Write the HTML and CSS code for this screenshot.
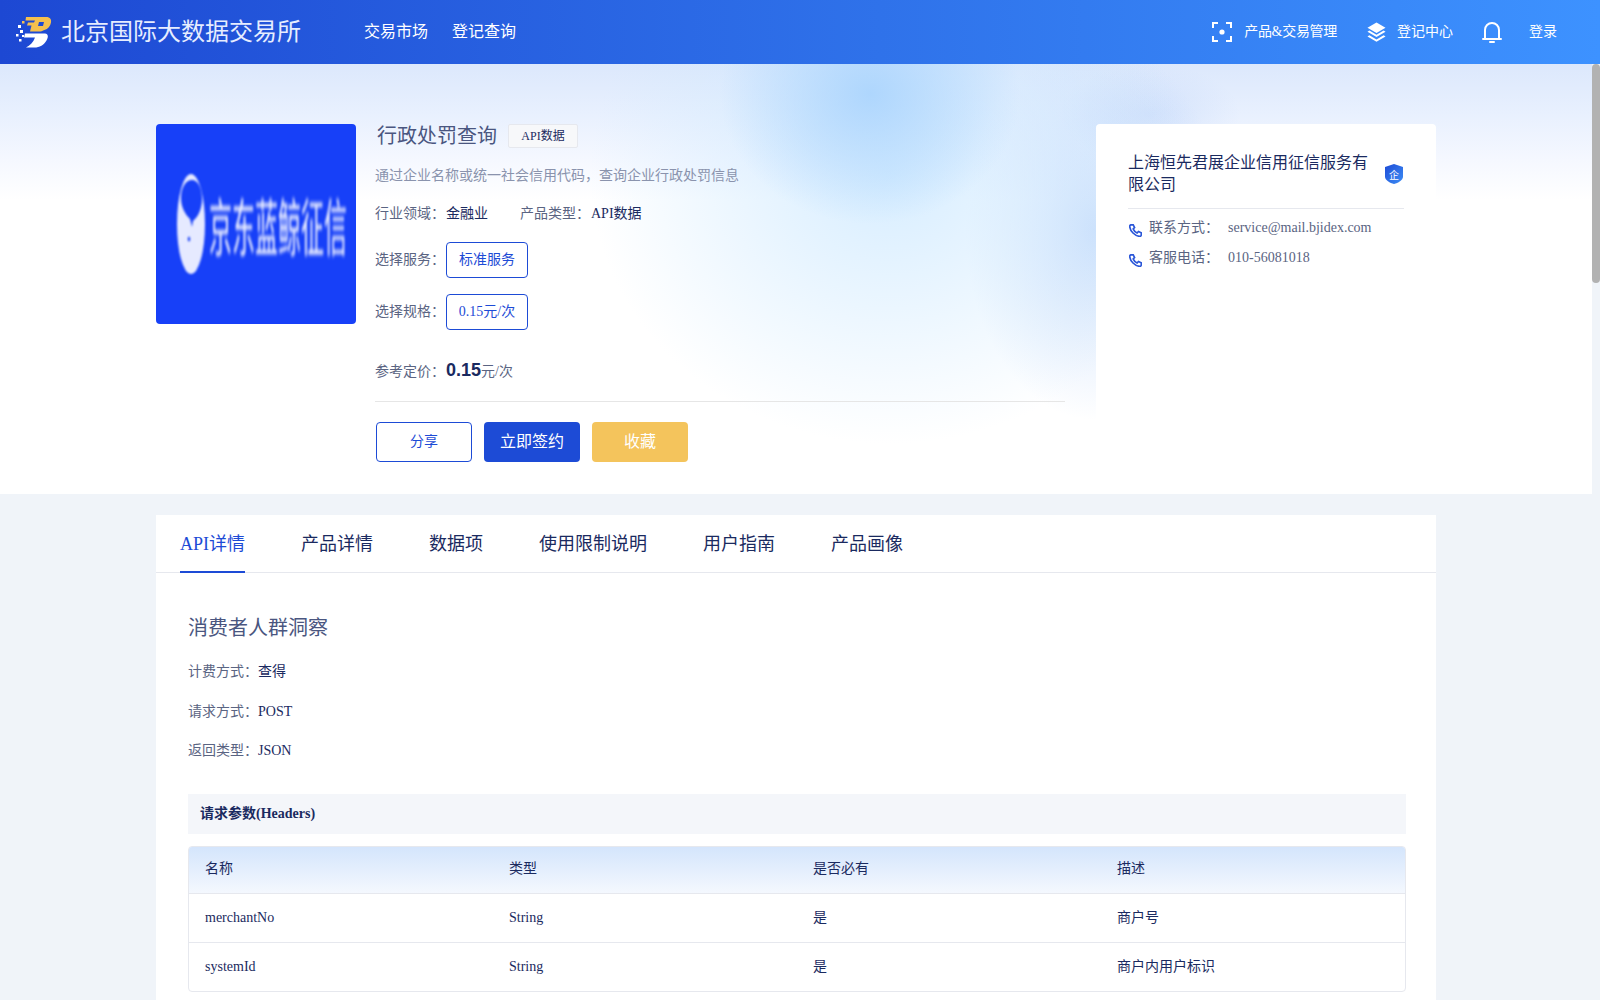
FILE: index.html
```html
<!DOCTYPE html>
<html lang="zh-CN">
<head>
<meta charset="utf-8">
<title>行政处罚查询</title>
<link rel="stylesheet" href="styles.css">
</head>
<body>
<div class="app">
  <header class="topbar">
    <div class="brand">
      <svg class="brand-logo" viewBox="0 0 36 32" width="36" height="32">
        <path fill="#f5c04e" fill-rule="evenodd" d="M10 1H30c4.500 0 5.500 2.500 5 5.500-.6 3.500-3 6.500-6.500 7.500-1 .3-2.500 1.500-4 1.500H14l1.500-6H11l1-3h6l1-2H9.500zM23 6l-1 4h5l1-4z"/>
        <path fill="#fff" d="M9 17.500h20c3.500.6 3.500 3.500 1.500 7-2.500 4.500-7 7-12 7H10c4-2 7.500-5.500 9-10h-11z"/>
        <g fill="#fff"><rect x="2" y="9" width="3" height="3"/><rect x="4" y="14" width="3" height="3"/><rect x="0" y="18" width="2.500" height="2.500"/><rect x="3" y="23" width="2.500" height="2.500"/><rect x="6" y="19" width="2" height="2"/></g>
        <rect x="6" y="5" width="2.500" height="2.500" fill="#f5c04e"/>
      </svg>
      <span class="brand-name">北京国际大数据交易所</span>
    </div>
    <nav class="mainnav"><a>交易市场</a><a>登记查询</a></nav>
    <div class="toolbar">
      <a class="tool">
        <svg class="tool-icon" viewBox="0 0 20 20" width="20" height="20" fill="none" stroke="#fff" stroke-width="2"><path d="M1 6V1h5M14 1h5v5M19 14v5h-5M6 19H1v-5"/><circle cx="10" cy="10" r="2.600" fill="#fff" stroke="none"/></svg>
        <span class="tool-text tool-tight">产品&amp;交易管理</span>
      </a>
      <a class="tool tool-stack">
        <svg class="tool-icon" viewBox="0 0 20 22" width="19" height="22" fill="#fff"><path d="M10 1l9.500 5.500L10 12 .5 6.500z"/><path d="M2.500 9.500L10 14l7.500-4.500 2 1.200L10 16.300.5 10.700z"/><path d="M2.500 14.500L10 19l7.500-4.500 2 1.200L10 21.300.5 15.700z"/></svg>
        <span class="tool-text">登记中心</span>
      </a>
      <svg class="bell" viewBox="0 0 20 22" width="20" height="22" fill="none" stroke="#fff" stroke-width="2"><path d="M3 17V9a7 7 0 0 1 14 0v8"/><path d="M1 18h18" stroke-linecap="round"/><path d="M8 21h4" stroke-linecap="round"/></svg>
      <a class="login">登录</a>
    </div>
  </header>

  <div class="body-row">
    <main class="scroller">
      <section class="hero">
        <div class="hero-inner">
          <div class="cover">
            <svg class="cover-mark" viewBox="0 0 30 102" width="30" height="102">
              <ellipse cx="15" cy="51" rx="14" ry="50" fill="#e6eaff"/>
              <path d="M16 7c6 0 10 8 10 19 0 10-4 18-9 22l-1 6-2-8C9 41 5 34 5 25 5 14 10 7 16 7z" fill="#1740f8"/>
              <ellipse cx="13" cy="66" rx="1.200" ry="2.500" fill="#1740f8"/>
            </svg>
            <span class="cover-name">京东蓝鲸征信</span>
          </div>
          <div class="info">
            <div class="title-row"><h1>行政处罚查询</h1><span class="tag">API数据</span></div>
            <p class="desc">通过企业名称或统一社会信用代码，查询企业行政处罚信息</p>
            <div class="meta-row">
              <span><span class="label">行业领域：</span><span class="val">金融业</span></span>
              <span><span class="label">产品类型：</span><span class="val">API数据</span></span>
            </div>
            <div class="choice"><span class="label">选择服务：</span><span class="chip">标准服务</span></div>
            <div class="choice"><span class="label">选择规格：</span><span class="chip">0.15元/次</span></div>
            <div class="price"><span class="label">参考定价：</span><b>0.15</b><span class="label">元/次</span></div>
            <div class="actions">
              <button class="btn btn-line">分享</button>
              <button class="btn btn-main">立即签约</button>
              <button class="btn btn-gold">收藏</button>
            </div>
          </div>
          <aside class="vendor">
            <div class="vendor-head">
              <div class="vendor-name">上海恒先君展企业信用征信服务有限公司</div>
              <span class="shield">
                <svg viewBox="0 0 18 20" width="18" height="20">
                  <defs><linearGradient id="shieldFill" x1="0" y1="0" x2="1" y2="1"><stop offset="0" stop-color="#1d4bd6"/><stop offset="1" stop-color="#3d8ef5"/></linearGradient></defs>
                  <path fill="url(#shieldFill)" d="M9 0l9 3v10c0 3-5 6-9 7-4-1-9-4-9-7V3z"/>
                </svg>
                <i>企</i>
              </span>
            </div>
            <div class="contact">
              <svg viewBox="0 0 14 14" width="13" height="13" fill="none" stroke="#2a56d8" stroke-width="1.800"><path d="M2 1l2.500-.2 1.500 3-1.500 1.500c.8 2 2.300 3.600 4.200 4.400L10.200 8l3 1.500V12c-.2.900-1 1.500-2 1.300C6 12.500 1.500 8 .8 3 .7 2 1.200 1.200 2 1z"/></svg>
              <span class="c-label">联系方式：</span><span class="c-val">service@mail.bjidex.com</span>
            </div>
            <div class="contact">
              <svg viewBox="0 0 14 14" width="13" height="13" fill="none" stroke="#2a56d8" stroke-width="1.800"><path d="M2 1l2.500-.2 1.500 3-1.500 1.500c.8 2 2.300 3.600 4.200 4.400L10.200 8l3 1.500V12c-.2.900-1 1.500-2 1.300C6 12.500 1.500 8 .8 3 .7 2 1.200 1.200 2 1z"/></svg>
              <span class="c-label">客服电话：</span><span class="c-val">010-56081018</span>
            </div>
          </aside>
        </div>
      </section>

      <section class="panel">
        <div class="tabs">
          <a class="tab active">API详情</a><a class="tab">产品详情</a><a class="tab">数据项</a><a class="tab">使用限制说明</a><a class="tab">用户指南</a><a class="tab">产品画像</a>
        </div>
        <div class="panel-body">
          <h2>消费者人群洞察</h2>
          <p class="kv"><span class="label">计费方式：</span><span class="val">查得</span></p>
          <p class="kv"><span class="label">请求方式：</span><span class="val">POST</span></p>
          <p class="kv"><span class="label">返回类型：</span><span class="val">JSON</span></p>
          <div class="section-bar">请求参数(Headers)</div>
          <div class="tbl">
            <div class="tr th"><span>名称</span><span>类型</span><span>是否必有</span><span>描述</span></div>
            <div class="tr"><span>merchantNo</span><span>String</span><span class="zh">是</span><span class="zh">商户号</span></div>
            <div class="tr"><span>systemId</span><span>String</span><span class="zh">是</span><span class="zh">商户内用户标识</span></div>
          </div>
        </div>
      </section>
    </main>
    <div class="rail"><div class="thumb"></div></div>
  </div>
</div>
</body>
</html>
```
FILE: styles.css
```css
* { box-sizing: border-box; }
html, body { margin: 0; height: 100%; overflow: hidden; }
body { font-family: "Liberation Serif", "Noto Sans CJK SC", serif; font-size: 14px; color: #1a2a60; background: #f0f4f9; }
a { color: inherit; text-decoration: none; }
h1, h2, p { margin: 0; font-weight: 400; }

.app { height: 100vh; display: flex; flex-direction: column; }

.topbar { flex: 0 0 64px; display: flex; align-items: center; color: #fff; background: linear-gradient(90deg, #1d48d3 0%, #2f72ea 55%, #3d92ff 100%); }
.brand { display: flex; align-items: center; margin-left: 16px; gap: 9px; }
.brand-name { font-size: 24px; line-height: 32px; color: #e6edff; }
.mainnav { display: flex; gap: 24px; margin-left: 63px; font-size: 16px; }
.mainnav a { display: block; padding-bottom: 4px; }
.toolbar { margin-left: auto; display: flex; align-items: center; margin-right: 43px; }
.tool { display: flex; align-items: center; gap: 12px; margin-right: 30px; }
.tool-stack { gap: 11px; margin-right: 29px; }
.tool-icon { display: block; }
.tool-text, .login { display: block; padding-bottom: 4px; }
.tool-tight { letter-spacing: -.3px; }
.bell { display: block; margin-right: 27px; }

.body-row { flex: 1; min-height: 0; display: flex; }
.scroller { flex: 1; min-width: 0; overflow: hidden; }
.rail { flex: 0 0 8px; }
.thumb { height: 219px; background: #b2b2b2; border-radius: 4px; }

.hero { height: 430px; padding-top: 60px; background:
  radial-gradient(ellipse 150px 130px at 870px 30px, rgba(170,212,253,.9), rgba(170,212,253,0)),
  radial-gradient(ellipse 300px 270px at 890px 110px, rgba(208,234,255,.85), rgba(208,234,255,0)),
  radial-gradient(ellipse 130px 190px at 1095px 166px, rgba(190,215,250,.8), rgba(190,215,250,0)),
  radial-gradient(ellipse 90px 50px at 1150px 50px, rgba(196,216,250,.55), rgba(196,216,250,0)),
  linear-gradient(180deg, #dce8fc 0, #e8f0fe 49px, #f5f8ff 96px, #fff 136px); }
.hero-inner { width: 1280px; margin: 0 auto; display: flex; align-items: stretch; height: 370px; }

.cover { flex: 0 0 200px; height: 200px; border-radius: 4px; background: #1740f8; display: flex; align-items: center; padding-left: 20px; overflow: hidden; }
.cover-mark { display: block; filter: blur(1px); flex: none; }
.cover-name { flex: none; margin-left: 3px; font-family: "Noto Sans CJK SC", sans-serif; font-size: 23px; line-height: 24px; color: #f2f4ff; white-space: nowrap; transform: scaleY(2.7); filter: blur(.8px); }

.info { flex: 0 0 690px; margin-left: 19px; }
.title-row { display: flex; align-items: center; height: 24px; gap: 11px; padding-left: 2px; }
h1 { font-size: 20px; color: #4a5680; padding-bottom: 3px; }
.tag { width: 70px; height: 24px; padding-bottom: 2px; display: flex; align-items: center; justify-content: center; font-size: 12px; border: 1px solid #e6e8ee; background: #f7f8fa; border-radius: 2px; }
.desc { margin-top: 17px; line-height: 22px; color: #8a93ad; }
.meta-row { margin-top: 16px; display: flex; gap: 32px; line-height: 22px; }
.meta-row .val { margin-left: 1px; }
.label { color: #5a6482; }
.val { color: #1a2a60; }
.choice { display: flex; align-items: center; height: 36px; margin-top: 16px; }
.meta-row + .choice { margin-top: 17px; }
.choice .label { display: block; padding-bottom: 4px; }
.chip { width: 82px; height: 36px; margin-left: 1px; padding-bottom: 4px; display: flex; align-items: center; justify-content: center; color: #1d4bd6; border: 1px solid #1d4bd6; border-radius: 4px; }
.price { margin-top: 26px; padding-bottom: 15px; line-height: 28px; border-bottom: 1px solid #e6e6e6; }
.price b { font-family: "Liberation Sans", sans-serif; font-size: 18px; color: #1a2a60; margin-left: 1px; }
.actions { display: flex; gap: 12px; margin: 20px 0 0 1px; }
.btn { width: 96px; height: 40px; padding: 0 0 5px; border-radius: 4px; font-family: inherit; font-size: 16px; color: #fff; border: 0; }
.btn-line { font-size: 14px; color: #1d4bd6; background: #fff; border: 1px solid #1d4bd6; }
.btn-main { background: #1d4bd6; }
.btn-gold { background: #f4c45c; }

.vendor { flex: 0 0 340px; margin-left: 31px; background: #fff; border-radius: 4px; padding: 28px 32px 0; }
.vendor-head { display: flex; align-items: center; justify-content: space-between; padding-bottom: 12px; border-bottom: 1px solid #e6e8ee; }
.vendor-name { width: 244px; font-size: 16px; line-height: 22px; }
.shield { position: relative; display: block; width: 18px; height: 20px; margin-right: 1px; }
.shield svg { display: block; }
.shield i { position: absolute; inset: 0; display: flex; align-items: center; justify-content: center; font-style: normal; font-size: 10px; color: #fff; }
.contact { display: flex; align-items: center; height: 30px; color: #5a6482; }
.contact svg { flex: none; margin: 4px 7px 0 1px; }
.vendor-head + .contact { margin-top: 4px; }
.c-label { display: block; width: 79px; padding-bottom: 4px; }

.panel { width: 1280px; margin: 21px auto 0; background: #fff; height: 600px; }
.tabs { display: flex; gap: 56px; height: 58px; padding-left: 24px; border-bottom: 1px solid #e6e8ee; }
.tab { height: 58px; line-height: 58px; font-size: 18px; }
.tab.active { color: #1d4bd6; border-bottom: 2px solid #1d4bd6; }
.panel-body { padding: 41px 30px 0 32px; }
h2 { font-size: 20px; line-height: 28px; color: #4a5680; }
.kv { margin-top: 17.5px; line-height: 22px; }
h2 + .kv { margin-top: 19px; }
.section-bar { margin-top: 32px; height: 40px; line-height: 40px; padding-left: 12px; font-weight: 700; background: #f4f6fa; }
.tbl { margin-top: 12px; border: 1px solid #e6e8ee; border-radius: 4px; overflow: hidden; }
.tr { display: grid; grid-template-columns: repeat(4, 1fr); height: 49px; align-items: center; border-bottom: 1px solid #e6e8ee; }
.tr span { padding-left: 16px; }
.tr .zh { padding-bottom: 4px; }
.tr:last-child { border-bottom: 0; height: 48px; }
.th { height: 47px; background: linear-gradient(180deg, #d4e5fc, #f4f8fe); }
.th span { padding-bottom: 6px; }
```
